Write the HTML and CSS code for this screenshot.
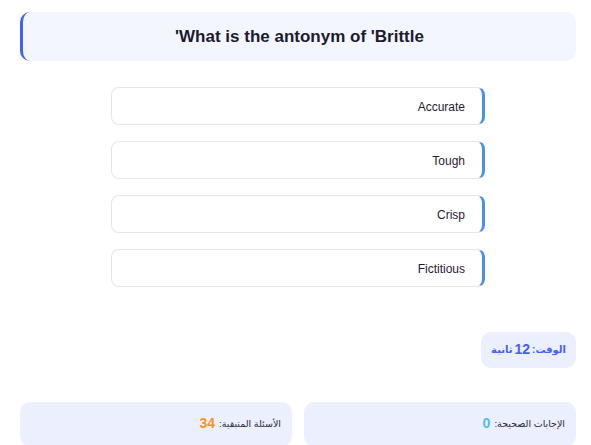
FILE: index.html
```html
<!DOCTYPE html>
<html lang="ar" dir="rtl">
<head>
<meta charset="utf-8">
<link rel="stylesheet" href="styles.css">
</head>
<body>
<div class="quiz">
  <div class="question">What is the antonym of 'Brittle'</div>
  <div class="options">
    <div class="option">Accurate</div>
    <div class="option">Tough</div>
    <div class="option">Crisp</div>
    <div class="option">Fictitious</div>
  </div>
  <div class="timer-row">
    <div class="timer"><span class="ar">الوقت:</span> <b>12</b> <span class="ar">ثانية</span></div>
  </div>
  <div class="stats">
    <div class="stat"><span class="ar">الإجابات الصحيحة:</span> <b class="correct">0</b></div>
    <div class="stat"><span class="ar">الأسئلة المتبقية:</span> <b class="remaining">34</b></div>
  </div>
</div>
</body>
</html>
```
FILE: styles.css
```css
html, body {
  margin: 0;
  padding: 0;
  background: #ffffff;
}
body {
  font-family: "Liberation Sans", "DejaVu Sans", sans-serif;
  color: #1f2033;
}
.quiz {
  margin: 12px 15px 0 20px;
  display: flex;
  flex-direction: column;
}
.question {
  height: 49px;
  box-sizing: border-box;
  background: #f3f6fe;
  border-left: 3px solid #4361ee;
  border-radius: 10px;
  display: flex;
  align-items: center;
  justify-content: center;
  font-weight: bold;
  font-size: 17px;
  color: #1b1b2f;
}
.options {
  margin-top: 26px;
  display: flex;
  flex-direction: column;
  gap: 16px;
  align-items: center;
}
.option {
  width: 374px;
  height: 38px;
  box-sizing: border-box;
  border: 1px solid #e4e6ea;
  border-right: 3px solid #4a90e8;
  border-radius: 8px;
  background: #fff;
  display: flex;
  align-items: center;
  padding-right: 17px;
  padding-top: 1px;
  font-size: 12px;
  color: #1f2033;
}
.timer-row {
  margin-top: 45px;
  display: flex;
}
.timer {
  background: #eceffd;
  border-radius: 10px;
  height: 36px;
  box-sizing: border-box;
  padding: 0 10px 2px;
  display: flex;
  align-items: center;
  gap: 2px;
  color: #4361ee;
  font-weight: bold;
  font-size: 10px;
}
.timer b {
  font-size: 14px;
}
.stats {
  margin-top: 34px;
  display: grid;
  grid-template-columns: 1fr 1fr;
  gap: 12px;
}
.stat {
  background: #eceffd;
  border-radius: 10px;
  box-sizing: border-box;
  padding: 0 11px 2px;
  font-size: 9.5px;
  color: #2a2a3a;
  display: flex;
  align-items: center;
  align-self: start;
  gap: 4px;
  height: 44px;
}
.stat b {
  font-size: 14px;
}
.correct { color: #4cc0f0; }
.remaining { color: #f7941d; }
```
